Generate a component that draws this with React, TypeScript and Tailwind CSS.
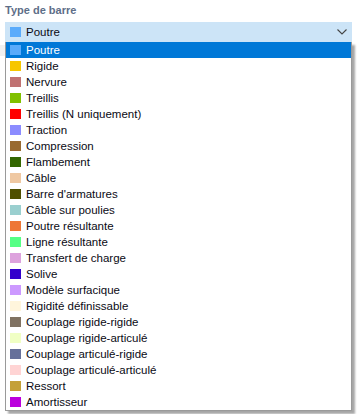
import React from 'react';

const ITEMS: { label: string; color: string }[] = [
  { label: 'Poutre', color: '#5aabfb' },
  { label: 'Rigide', color: '#f7c600' },
  { label: 'Nervure', color: '#c07272' },
  { label: 'Treillis', color: '#80c000' },
  { label: 'Treillis (N uniquement)', color: '#ff0000' },
  { label: 'Traction', color: '#8c8cff' },
  { label: 'Compression', color: '#996a30' },
  { label: 'Flambement', color: '#336600' },
  { label: 'Câble', color: '#efc8a2' },
  { label: "Barre d'armatures", color: '#4f4f00' },
  { label: 'Câble sur poulies', color: '#9acfcf' },
  { label: 'Poutre résultante', color: '#ee7736' },
  { label: 'Ligne résultante', color: '#55ff85' },
  { label: 'Transfert de charge', color: '#dda2dd' },
  { label: 'Solive', color: '#3300cc' },
  { label: 'Modèle surfacique', color: '#cc99ff' },
  { label: 'Rigidité définissable', color: '#fff5dc' },
  { label: 'Couplage rigide-rigide', color: '#807262' },
  { label: 'Couplage rigide-articulé', color: '#f0ffc4' },
  { label: 'Couplage articulé-rigide', color: '#66709a' },
  { label: 'Couplage articulé-articulé', color: '#ffd4d4' },
  { label: 'Ressort', color: '#c4a038' },
  { label: 'Amortisseur', color: '#bb00dd' },
];

function Swatch({ color }: { color: string }) {
  return <span className="w-[11px] h-[10px] shrink-0" style={{ backgroundColor: color }} />;
}

export default function App() {
  return (
    <div
      className="w-[357px] h-[414px] bg-white relative overflow-hidden text-[11.5px] text-[#0a0a14]"
      style={{ fontFamily: '"Liberation Sans", Arial, sans-serif' }}
    >
      <div className="pl-[5px] pt-[4px] h-[22px] font-bold text-[11px] text-[#5e6e88] leading-[13px]">
        Type de barre
      </div>

      <div className="mx-[5px] w-[347px] h-[20px] bg-[#cce4f7] flex items-center pl-[5px] pr-[4px] gap-[5px]">
        <Swatch color="#5aabfb" />
        <span className="flex-1 leading-[14px]">Poutre</span>
        <svg width="10" height="6" viewBox="0 0 10 6" className="mr-[1px]">
          <path d="M0.5 0.5 L5 5 L9.5 0.5" fill="none" stroke="#444" strokeWidth="1.1" />
        </svg>
      </div>

      <div className="absolute left-[0px] top-[45px] w-[5px] h-[11px] bg-[#f0f0f0]" />

      <div className="absolute left-[5px] top-[42px] w-[347px] border-x border-b border-[#9a9a9a] bg-white shadow-[3px_3px_2px_rgba(0,0,0,0.35)]">
        {ITEMS.map((item, i) => (
          <div
            key={item.label}
            className={
              'h-[16px] flex items-center pl-[4px] gap-[5px] leading-[14px] ' +
              (i === 0 ? 'bg-[#0078d7] text-white' : '')
            }
          >
            <Swatch color={item.color} />
            <span>{item.label}</span>
          </div>
        ))}
      </div>
    </div>
  );
}
